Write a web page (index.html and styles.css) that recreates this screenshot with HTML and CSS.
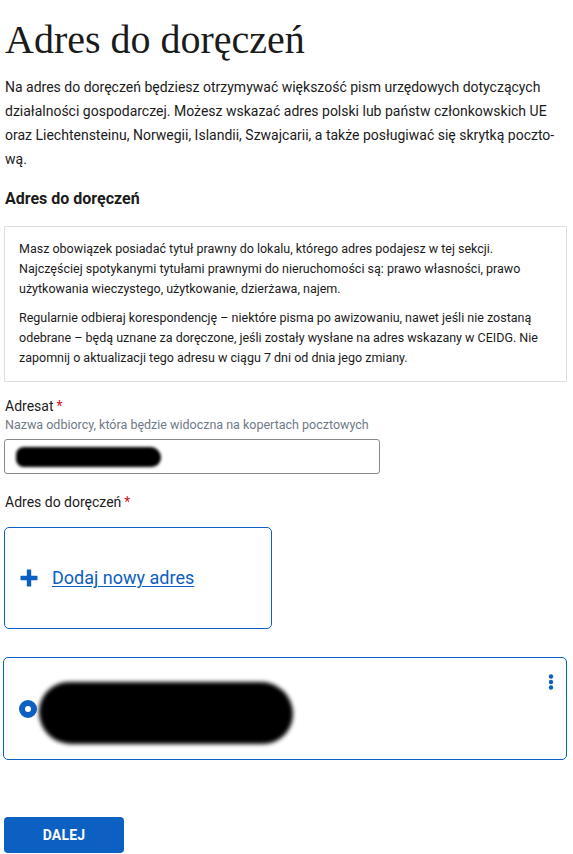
FILE: index.html
```html
<!DOCTYPE html>
<html lang="pl">
<head>
<meta charset="utf-8">
<title>Adres do doręczeń</title>
<link rel="stylesheet" href="styles.css">
</head>
<body>
<main class="page">
  <h1 class="title">Adres do doręczeń</h1>
  <p class="lead">Na adres do doręczeń będziesz otrzymywać większość pism urzędowych dotyczących działalności gospodarczej. Możesz wskazać adres polski lub państw członkowskich UE oraz Liechtensteinu, Norwegii, Islandii, Szwajcarii, a także posługiwać się skrytką poczto&shy;wą.</p>
  <h2 class="section-title">Adres do doręczeń</h2>
  <div class="info">
    <p>Masz obowiązek posiadać tytuł prawny do lokalu, którego adres podajesz w tej sekcji. Najczęściej spotykanymi tytułami prawnymi do nieruchomości są: prawo własności, prawo użytkowania wieczystego, użytkowanie, dzierżawa, najem.</p>
    <p>Regularnie odbieraj korespondencję – niektóre pisma po awizowaniu, nawet jeśli nie zostaną odebrane – będą uznane za doręczone, jeśli zostały wysłane na adres wskazany w CEIDG. Nie zapomnij o aktualizacji tego adresu w ciągu 7 dni od dnia jego zmiany.</p>
  </div>

  <div class="field">
    <div class="label">Adresat<span class="req">*</span></div>
    <div class="hint">Nazwa odbiorcy, która będzie widoczna na kopertach pocztowych</div>
    <div class="input"><span class="redact redact-small"></span></div>
  </div>

  <div class="label label-addr">Adres do doręczeń<span class="req">*</span></div>

  <div class="add-card">
    <svg class="plus" width="18" height="18" viewBox="0 0 18 18" aria-hidden="true">
      <rect x="6.8" y="0.5" width="4.4" height="17" rx="0.6" fill="#0b60c2"/>
      <rect x="0.5" y="6.8" width="17" height="4.4" rx="0.6" fill="#0b60c2"/>
    </svg>
    <a class="add-link" href="#">Dodaj nowy adres</a>
  </div>

  <div class="addr-card">
    <span class="radio"></span>
    <span class="redact redact-big"></span>
    <svg class="dots" width="6" height="16" viewBox="0 0 6 16" aria-hidden="true">
      <circle cx="3" cy="2.5" r="2.2" fill="#0b60c2"/>
      <circle cx="3" cy="8" r="2.2" fill="#0b60c2"/>
      <circle cx="3" cy="13.5" r="2.2" fill="#0b60c2"/>
    </svg>
  </div>

  <button class="btn" type="button">DALEJ</button>
</main>
</body>
</html>
```

FILE: styles.css
```css
* { box-sizing: border-box; }

body {
  margin: 0;
  background: #fff;
  color: #1b1b1b;
  font-family: Roboto, "Liberation Sans", Arial, sans-serif;
}

.page {
  padding: 0 6px 0 4px;
}

.title {
  font-family: "Liberation Serif", "DejaVu Serif", serif;
  font-weight: 400;
  font-size: 40px;
  line-height: 48px;
  margin: 16px 0 0 1px;
  color: #1b1b1b;
}

.lead {
  font-size: 14px;
  line-height: 24px;
  margin: 11px 0 0 1px;
  hyphens: manual;
}

.section-title {
  font-size: 16px;
  line-height: 24px;
  font-weight: 700;
  margin: 16px 0 0 1px;
}

.info {
  margin-top: 15px;
  border: 1px solid #dedede;
  padding: 12px 14px 13px;
  font-size: 12.5px;
  line-height: 20px;
}

.info p { margin: 0; }
.info p + p { margin-top: 9px; }

.field { margin-top: 14px; }

.label {
  font-size: 14px;
  line-height: 20px;
  padding-left: 1px;
}

.req {
  color: #d4111e;
  margin-left: 3px;
}

.hint {
  font-size: 12.5px;
  line-height: 18px;
  color: #6f7a86;
  padding-left: 1px;
}

.input {
  margin-top: 5px;
  width: 376px;
  height: 35px;
  border: 1px solid #8a8a8a;
  border-radius: 3px;
  display: flex;
  align-items: center;
  padding-left: 11px;
}

.redact {
  display: block;
  background: #000;
  filter: blur(1.5px);
}

.redact-small {
  width: 145px;
  height: 20px;
  border-radius: 10px 14px 12px 10px;
}

.label-addr { margin-top: 18px; }

.add-card {
  margin-top: 15px;
  width: 268px;
  height: 102px;
  border: 1px solid #0b60c2;
  border-radius: 5px;
  display: flex;
  align-items: center;
  gap: 14px;
  padding-left: 15px;
}

.plus { display: block; }

.add-link {
  font-size: 18px;
  line-height: 24px;
  color: #0b60c2;
  text-decoration: underline;
  text-underline-offset: 2px;
  text-decoration-thickness: 1px;
}

.addr-card {
  position: relative;
  margin: 28px 0 0 -1px;
  height: 103px;
  border: 1px solid #0b60c2;
  border-radius: 5px;
  display: flex;
  align-items: center;
  padding-left: 15px;
}

.radio {
  width: 18px;
  height: 18px;
  border-radius: 50%;
  border: 6px solid #0b60c2;
  background: #fff;
  flex: none;
}

.redact-big {
  margin-left: 2px;
  width: 254px;
  height: 62px;
  border-radius: 30px 32px 30px 32px;
  margin-top: 8px;
  filter: blur(2px);
}

.dots {
  position: absolute;
  top: 16px;
  right: 12px;
}

.btn {
  display: block;
  margin-top: 57px;
  width: 120px;
  height: 36px;
  border: 0;
  border-radius: 4px;
  background: #0b60c2;
  color: #fff;
  font-family: Roboto, "Liberation Sans", Arial, sans-serif;
  font-weight: 700;
  font-size: 14px;
  letter-spacing: 0.2px;
}
```
